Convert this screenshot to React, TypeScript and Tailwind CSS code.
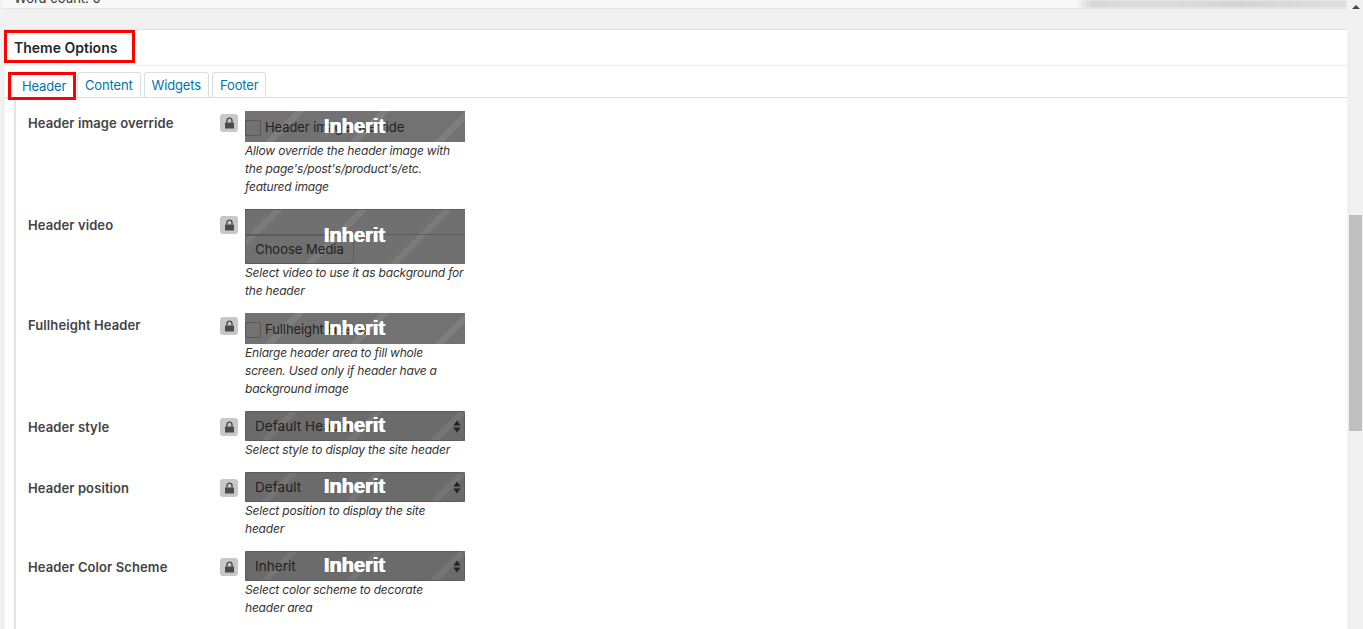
import React from "react";

const Lock = () => (
  <div className="flex h-[18px] w-[18px] items-center justify-center rounded-[3px] bg-[#c8c8c8]">
    <svg width="11" height="12" viewBox="0 0 11 12" fill="#4a4a4a">
      <path d="M1 5.4h9v5.6a.6.6 0 0 1-.6.6H1.6a.6.6 0 0 1-.6-.6z" />
      <path d="M3 5.4V3.6a2.5 2.5 0 0 1 5 0v1.8" fill="none" stroke="#4a4a4a" strokeWidth="1.4" />
    </svg>
  </div>
);

const Stack = ({
  height,
  stripes,
  lift,
  children,
}: {
  height: string;
  stripes: string;
  lift: string;
  children: React.ReactNode;
}) => (
  <div className={`grid w-[220px] grid-cols-1 grid-rows-1 overflow-hidden ${height}`}>
    <div className={`col-start-1 row-start-1 ${stripes}`} />
    {children}
    <span
      className={`col-start-1 row-start-1 place-self-center pr-[1px] font-['Liberation_Sans',sans-serif] text-[20px] font-bold leading-[24px] text-white [text-shadow:0.4px_0_0_#fff,-0.4px_0_0_#fff] ${lift}`}
    >
      Inherit
    </span>
  </div>
);

const Select = ({ value }: { value: string }) => (
  <Stack
    height="h-[30px]"
    lift="pb-[2px]"
    stripes="bg-[repeating-linear-gradient(135deg,#717171_0px,#717171_32px,#7c7c7c_32px,#7c7c7c_38px,#717171_38px,#717171_60px)]"
  >
    <div className="col-start-1 row-start-1 flex items-center justify-between rounded-[4px] border border-[#5c5c5c] bg-[#30303018] pl-[9px] pr-[3px] pt-[1px] text-[13.5px] tracking-[0.05px] text-[#222]">
      {value}
      <svg width="8" height="13" viewBox="0 0 8 13" fill="#222">
        <path d="M4 0.5 7.5 5.5H.5zM.5 7.5h7L4 12.5z" />
      </svg>
    </div>
  </Stack>
);

const Check = ({ label }: { label: string }) => (
  <Stack
    height="h-[31px]"
    lift="pb-[2px]"
    stripes="bg-[repeating-linear-gradient(135deg,#727272_0px,#727272_36px,#7e7e7e_36px,#7e7e7e_42px,#727272_42px,#727272_60px)]"
  >
    <div className="col-start-1 row-start-1 flex items-center gap-[4px] pt-[2px]">
      <div className="h-[16px] w-[16px] rounded-[1px] border border-[#585858]" />
      <span className="text-[13px] tracking-[-0.08px] text-[#222]">{label}</span>
    </div>
  </Stack>
);

const Media = () => (
  <Stack
    height="h-[55px]"
    lift="pb-[4px]"
    stripes="bg-[repeating-linear-gradient(135deg,#707070_0px,#707070_21px,#7b7b7b_21px,#7b7b7b_27px,#707070_27px,#707070_60px)]"
  >
    <div className="col-start-1 row-start-1 flex flex-col">
      <div className="h-[26px] w-[221px] border border-[#5c5c5c]" />
      <div className="flex h-[29px] w-[109px] items-center justify-center rounded-[3px] border border-[#5c5c5c] pt-[1px] text-[13px] text-[#222]">
        Choose Media
      </div>
    </div>
  </Stack>
);

const rows: { label: string; pt: string; lock: string; control: React.ReactNode; desc: string[] }[] = [
  {
    label: "Header image override",
    pt: "pt-[2px]",
    lock: "pt-[3px]",
    control: <Check label="Header image override" />,
    desc: ["Allow override the header image with", "the page's/post's/product's/etc.", "featured image"],
  },
  {
    label: "Header video",
    pt: "pt-[6px]",
    lock: "pt-[7px]",
    control: <Media />,
    desc: ["Select video to use it as background for", "the header"],
  },
  {
    label: "Fullheight Header",
    pt: "pt-[2px]",
    lock: "pt-[4px]",
    control: <Check label="Fullheight Header" />,
    desc: ["Enlarge header area to fill whole", "screen. Used only if header have a", "background image"],
  },
  {
    label: "Header style",
    pt: "pt-[6px]",
    lock: "pt-[7px]",
    control: <Select value="Default Header" />,
    desc: ["Select style to display the site header"],
  },
  {
    label: "Header position",
    pt: "pt-[6px]",
    lock: "pt-[7px]",
    control: <Select value="Default" />,
    desc: ["Select position to display the site", "header"],
  },
  {
    label: "Header Color Scheme",
    pt: "pt-[6px]",
    lock: "pt-[7px]",
    control: <Select value="Inherit" />,
    desc: ["Select color scheme to decorate", "header area"],
  },
];

export default function App() {
  return (
    <div className="relative h-[629px] w-[1363px] overflow-hidden bg-[#f1f1f1] font-['Inter',sans-serif]">
      <div className="flex h-full">
        <div className="min-w-0 flex-1">
          <div className="ml-[2px] flex h-[9px] items-start overflow-hidden border-b border-[#e3e3e3] bg-[#f8f8f8] pl-[12px]">
            <span className="-mt-[9px] whitespace-nowrap text-[13px] leading-[14px] text-[#333]">Word count: 0</span>
            <div className="ml-auto h-full w-[272px] bg-[linear-gradient(90deg,#f8f8f8,#d6d6d6_6%,#dcdcdc_30%,#d4d4d4_60%,#dedede)] blur-[1px]" />
          </div>
          <div className="ml-[5px] mt-[20px] border-t border-[#e2e2e2] bg-white">
            <div className="flex h-[36px] items-center border-b border-[#eee] pl-[9px]">
              <h2 className="text-[14px] font-semibold text-[#23282d]">Theme Options</h2>
            </div>
            <div className="flex h-[32px] items-end gap-[2px] border-b border-[#ddd] pl-[6px]">
              {["Header", "Content", "Widgets", "Footer"].map((t, i) => (
                <div
                  key={t}
                  className={`flex h-[25px] items-center rounded-t-[3px] border border-b-0 border-[#ddd] text-[13px] tracking-[-0.15px] text-[#0073aa] ${
                    i === 0 ? "w-[64px] pl-[10px] pt-[3px]" : "px-[7px] pt-[1px]"
                  } ${i > 1 ? "ml-[1px]" : ""}`}
                >
                  {t}
                </div>
              ))}
            </div>
            <div className="ml-[9px] flex h-[600px] flex-col gap-[13px] border-l-2 border-[#e4e4e4] pl-[12px] pt-[13px]">
              {rows.map((r) => (
                <div key={r.label} className="flex">
                  <div className={`w-[192px] shrink-0 text-[13px] font-semibold leading-[20px] tracking-[0.1px] text-[#444] ${r.pt}`}>
                    {r.label}
                  </div>
                  <div className={`w-[25px] shrink-0 ${r.lock}`}>
                    <Lock />
                  </div>
                  <div className="w-[220px] shrink-0">
                    {r.control}
                    <div className="whitespace-nowrap text-[12px] italic leading-[18px] tracking-[-0.19px] text-[#333]">
                      {r.desc.map((d) => (
                        <div key={d}>{d}</div>
                      ))}
                    </div>
                  </div>
                </div>
              ))}
            </div>
          </div>
        </div>
        <div className="flex w-[16px] shrink-0 flex-col items-center bg-[#f1f1f1]">
          <svg className="mt-[5px] ml-[1px]" width="8" height="4" viewBox="0 0 8 4" fill="#444">
            <path d="M4 0 8 4H0z" />
          </svg>
          <div className="ml-[1px] mt-[206px] h-[216px] w-[13px] bg-[#bfbfbf]" />
        </div>
      </div>
      <div className="absolute left-[4px] top-[30px] h-[33px] w-[131px] border-[3px] border-[#f00]" />
      <div className="absolute left-[8px] top-[72px] h-[28px] w-[68px] border-[3px] border-[#f00]" />
    </div>
  );
}
